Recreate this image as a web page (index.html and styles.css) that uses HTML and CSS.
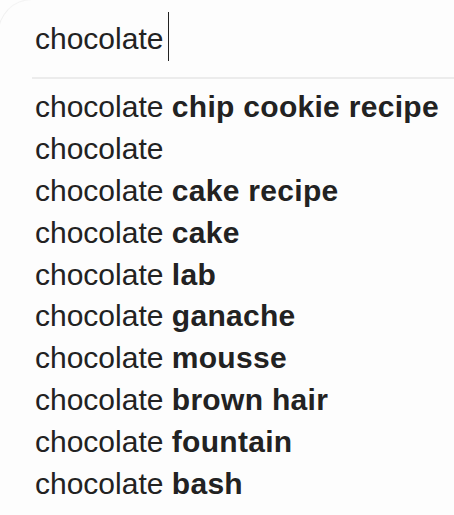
FILE: index.html
```html
<!DOCTYPE html>
<html>
<head>
<meta charset="utf-8">
<link rel="stylesheet" href="styles.css">
</head>
<body>
<div class="box">
  <div class="input"><span class="query">chocolate</span><span class="caret"></span></div>
  <div class="divider"></div>
  <ul class="list">
    <li>chocolate <b>chip cookie recipe</b></li>
    <li>chocolate</li>
    <li>chocolate <b>cake recipe</b></li>
    <li>chocolate <b>cake</b></li>
    <li>chocolate <b>lab</b></li>
    <li>chocolate <b>ganache</b></li>
    <li>chocolate <b>mousse</b></li>
    <li>chocolate <b>brown hair</b></li>
    <li>chocolate <b>fountain</b></li>
    <li>chocolate <b>bash</b></li>
  </ul>
</div>
</body>
</html>
```
FILE: styles.css
```css
html, body {
  margin: 0;
  padding: 0;
  background: #fdfdfd;
}
body {
  width: 454px;
  height: 515px;
  overflow: hidden;
  font-family: "Liberation Sans", Arial, sans-serif;
  color: #222;
}
.box {
  position: relative;
  height: 515px;
  border-top-left-radius: 34px;
  border-top: 1px solid #f4f4f4;
  border-left: 1px solid #f0f0f0;
  margin-left: -2px;
  margin-top: -1px;
  box-sizing: border-box;
}
.input {
  display: flex;
  align-items: center;
  height: 77px;
  padding-left: 36px;
  font-size: 30px;
}
.caret {
  width: 1px;
  height: 49px;
  background: #222;
  margin-left: 5px;
  margin-top: -4px;
}
.divider {
  height: 2px;
  background: #ececec;
  margin-left: 33px;
}
.list {
  list-style: none;
  margin: 0;
  padding: 7px 0 0 36px;
  font-size: 30px;
}
.list li {
  height: 41.9px;
  line-height: 41.9px;
  white-space: nowrap;
}
.list b {
  font-weight: 700;
  letter-spacing: 0.3px;
}
```
